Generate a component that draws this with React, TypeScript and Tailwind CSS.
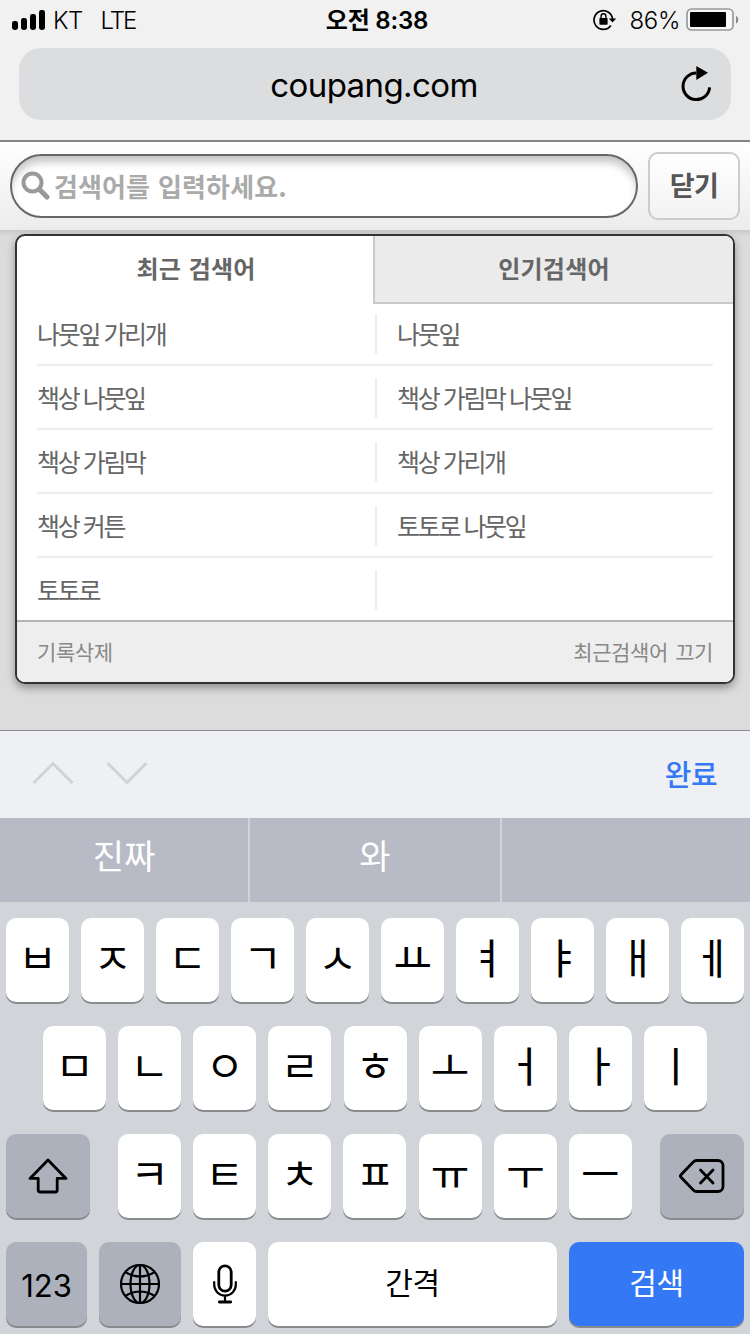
import React from 'react';
import clsx from 'clsx';

// --- Data ---
const recentKeywords = [
  ['나뭇잎 가리개', '나뭇잎'],
  ['책상 나뭇잎', '책상 가림막 나뭇잎'],
  ['책상 가림막', '책상 가리개'],
  ['책상 커튼', '토토로 나뭇잎'],
  ['토토로', ''],
];

const firstRow = ['ㅂ', 'ㅈ', 'ㄷ', 'ㄱ', 'ㅅ', 'ㅛ', 'ㅕ', 'ㅑ', 'ㅐ', 'ㅔ'];
const secondRow = ['ㅁ', 'ㄴ', 'ㅇ', 'ㄹ', 'ㅎ', 'ㅗ', 'ㅓ', 'ㅏ', 'ㅣ'];
const thirdRow = ['ㅋ', 'ㅌ', 'ㅊ', 'ㅍ', 'ㅠ', 'ㅜ', 'ㅡ'];

// --- Icons ---
const SignalIcon: React.FC = () => (
  <svg width="34" height="20" viewBox="0 0 34 20">
    <rect x="0" y="11" width="6" height="9" rx="2.4" />
    <rect x="9" y="8" width="6" height="12" rx="2.4" />
    <rect x="18" y="4" width="6" height="16" rx="2.4" />
    <rect x="27" y="0" width="6" height="20" rx="2.4" />
  </svg>
);

const RotationLockIcon: React.FC = () => (
  <svg width="24" height="22" viewBox="0 0 24 22" fill="none" stroke="#000">
    <path d="M17.9 16.4A9.3 9.3 0 1 1 19.6 10.500" strokeWidth="1.7" />
    <path d="M15.800 9.600h7.400l-3.700 4z" fill="#000" stroke="none" />
    <rect x="6.400" y="9" width="8.200" height="6.800" rx="0.800" fill="#000" stroke="none" />
    <path d="M8.100 9.800V7.200a2.400 2.400 0 0 1 4.800 0v2.600" strokeWidth="1.400" />
  </svg>
);

const BatteryIcon: React.FC = () => (
  <svg width="54" height="24" viewBox="0 0 54 24">
    <rect x="1" y="1" width="46" height="21" rx="4.500" fill="#f8f8f8" stroke="#999" strokeWidth="1.700" />
    <rect x="4" y="4" width="36" height="15" rx="1" fill="#000" />
    <path d="M50 8c3 1 3 6.500 0 7.500z" fill="#888" />
  </svg>
);

const ReloadIcon: React.FC = () => (
  <svg width="32" height="36" viewBox="0 0 32 36" fill="none">
    <path d="M28.600 21.300A13.300 13.300 0 1 1 15.300 7" stroke="#000" strokeWidth="3" />
    <path d="M15.300 0v14L27 6.800z" fill="#000" />
  </svg>
);

const SearchIcon: React.FC = () => (
  <svg width="30" height="30" viewBox="0 0 30 30" fill="none" stroke="#999">
    <circle cx="11.500" cy="11.500" r="9" strokeWidth="4" />
    <path d="M18.500 18.500l7.500 7.500" strokeWidth="5.200" strokeLinecap="round" />
  </svg>
);

const ShiftIcon: React.FC = () => (
  <svg width="42" height="38" viewBox="0 0 42 38" fill="none" stroke="#000" strokeWidth="2.800" strokeLinejoin="round">
    <path d="M21 3L3 21.400h8.200V33a2 2 0 0 0 2 2h15a2 2 0 0 0 2-2V21.400H39z" />
  </svg>
);

const DeleteIcon: React.FC = () => (
  <svg width="48" height="36" viewBox="0 0 48 36" fill="none" stroke="#000" strokeWidth="2.800" strokeLinecap="round" strokeLinejoin="round">
    <path d="M18.500 2.500H40a5 5 0 0 1 5 5v21a5 5 0 0 1-5 5H18.500a4 4 0 0 1-3-1.300L3 19.300a1.900 1.900 0 0 1 0-2.600L15.500 3.800a4 4 0 0 1 3-1.300z" />
    <path d="M22.500 12L35 25M35 12L22.500 25" />
  </svg>
);

const GlobeIcon: React.FC = () => (
  <svg width="42" height="42" viewBox="0 0 42 42" fill="none" stroke="#000" strokeWidth="2.200">
    <circle cx="21" cy="21" r="19" />
    <ellipse cx="21" cy="21" rx="9.500" ry="19" />
    <path d="M21 2v38M2 21h38M7 9.500q14 8 28 0M7 32.500q14-8 28 0" />
  </svg>
);

const MicIcon: React.FC = () => (
  <svg width="26" height="40" viewBox="0 0 26 40" fill="none" stroke="#000" strokeLinecap="round">
    <rect x="6.800" y="1.800" width="12.400" height="25.400" rx="6.200" strokeWidth="2.800" />
    <path d="M2.200 18v2.800a10.800 10.800 0 0 0 21.600 0v-2.800M13 32v5" strokeWidth="2.200" />
    <path d="M7.300 38h11.400" strokeWidth="2.800" />
  </svg>
);

// --- Keyboard key ---
interface KeyProps {
  children: React.ReactNode;
  className?: string;
}

const Key: React.FC<KeyProps> = ({ children, className }) => (
  <button
    className={clsx(
      'flex h-[84px] shrink-0 items-center justify-center rounded-[10px] shadow-[0_2px_0_#898b8f]',
      className
    )}
  >
    {children}
  </button>
);

const LetterKey: React.FC<{ letter: string }> = ({ letter }) => (
  <Key className="w-[63px] bg-white pb-[9px] text-[42px] font-normal">{letter}</Key>
);

// --- Sections ---
const BrowserBar: React.FC = () => (
  <header className="h-[142px] border-b-2 border-[#858585] bg-[#f1f1f1]">
    <div className="grid h-12 grid-cols-3 items-center pr-[10px] pl-3 pb-2">
      <div className="flex items-center font-[Inter,'Noto_Sans_CJK_KR',sans-serif] text-[24px] font-light">
        <SignalIcon />
        <span className="mt-[2px] ml-[7px] tracking-[-0.6px]">KT</span>
        <span className="mt-[2px] ml-[18px] tracking-[-2px]">LTE</span>
      </div>
      <div className="pt-[2px] pl-[2px] text-center font-[Inter,'Noto_Sans_CJK_KR',sans-serif] text-[24px] font-semibold tracking-[-0.2px] whitespace-nowrap">
        오전 8:38
      </div>
      <div className="flex items-center justify-end">
        <RotationLockIcon />
        <span className="mt-[2px] mr-[6px] ml-[13px] font-[Inter,sans-serif] text-[24px] font-light tracking-[-0.4px]">
          86%
        </span>
        <BatteryIcon />
      </div>
    </div>
    <div className="mx-[19px] flex h-[72px] items-center justify-end rounded-[22px] bg-[#dcddde] pr-[18px]">
      <span className="flex-1 pt-[2px] pl-12 text-center font-[Inter,sans-serif] text-[33px] tracking-[-0.6px]">
        coupang.com
      </span>
      <ReloadIcon />
    </div>
  </header>
);

const SearchForm: React.FC = () => (
  <div className="flex h-[88px] items-center gap-[10px] bg-gradient-to-b from-white to-[#ececec] px-[10px]">
    <div className="flex h-16 w-[628px] items-center rounded-full border-2 border-[#666] bg-white pl-[9px] shadow-[inset_0_8px_8px_-2px_#c4c4c4]">
      <SearchIcon />
      <span className="ml-[3px] text-[26px] font-bold tracking-[0.1px] text-[#aaa] [word-spacing:2px]">
        검색어를 입력하세요.
      </span>
    </div>
    <button className="h-[68px] w-[92px] rounded-[10px] border-2 border-[#ccc] bg-gradient-to-b from-white to-[#f2f2f2] pb-1 text-[27px] font-bold tracking-[-0.600px] text-[#555]">
      닫기
    </button>
  </div>
);

const KeywordPanel: React.FC = () => (
  <main className="h-[500px] bg-[#dcdcdc] px-[15px] pt-1 shadow-[inset_0_8px_5px_-5px_#c8c8c8]">
    <section className="h-[450px] overflow-hidden rounded-[10px] border-2 border-[#333] bg-white shadow-[0_4px_8px_rgba(0,0,0,0.35)]">
      <div className="flex h-[68px] text-[24px] font-bold text-[#666]">
        <div className="flex w-[356px] items-center justify-center pb-[5px] pl-[2px] tracking-[0.2px] [word-spacing:2px]">
          최근 검색어
        </div>
        <div className="flex flex-1 items-center justify-center border-b-2 border-l-2 border-[#c9c9c9] bg-[#ebebeb] pb-[3px] tracking-[0.2px]">
          인기검색어
        </div>
      </div>
      <ul className="h-[316px] px-5">
        {recentKeywords.map(([left, right]) => (
          <li
            key={left}
            className="flex h-16 items-center border-b-2 border-[#ededed] pt-[2px] text-[25px] tracking-[-2.300px] text-[#666] [word-spacing:1px] first:h-[62px] first:pt-0 last:h-[62px] last:border-b-0"
          >
            <span className="w-[338px] pb-[1px]">{left}</span>
            <span className="flex h-10 items-center border-l-2 border-[#ededed] pb-[1px] pl-5">{right}</span>
          </li>
        ))}
      </ul>
      <div className="flex h-[62px] items-center justify-between border-t-2 border-[#b5b5b5] bg-[#eee] px-5 pb-[2px] text-[21px] tracking-[-0.4px] text-[#888] [word-spacing:3px]">
        <span>기록삭제</span>
        <span>최근검색어 끄기</span>
      </div>
    </section>
  </main>
);

const InputAccessory: React.FC = () => (
  <div className="flex h-[88px] items-center justify-between border-t border-[#8e8e8e] bg-[#eff0f3] pr-[33px] pb-[3px] pl-8">
    <svg width="118" height="26" viewBox="0 0 118 26" fill="none" stroke="#d0d2d5" strokeWidth="2.800">
      <path d="M1.500 23L21 3.500L40.500 23M75.500 3L95 22.500L114.500 3" />
    </svg>
    <button className="text-[29px] font-medium tracking-[-0.6px] text-[#3478f6]">완료</button>
  </div>
);

const Suggestions: React.FC = () => (
  <div className="flex h-[84px] bg-[#b8bbc5] text-[34px] text-white">
    <div className="flex w-[250px] items-center justify-center border-r-2 border-[#d1d4da] pb-[10px]">진짜</div>
    <div className="flex w-[252px] items-center justify-center border-r-2 border-[#d1d4da] pb-[10px]">와</div>
  </div>
);

const Keyboard: React.FC = () => (
  <div className="flex h-[432px] flex-col gap-6 bg-[#d1d4d9] px-[6px] pt-4">
    <div className="flex justify-between">
      {firstRow.map((letter) => (
        <LetterKey key={letter} letter={letter} />
      ))}
    </div>
    <div className="flex justify-between px-[37px]">
      {secondRow.map((letter) => (
        <LetterKey key={letter} letter={letter} />
      ))}
    </div>
    <div className="flex justify-between">
      <Key className="w-[84px] bg-[#acb1bb]">
        <ShiftIcon />
      </Key>
      <div className="flex w-[514px] justify-between">
        {thirdRow.map((letter) => (
          <LetterKey key={letter} letter={letter} />
        ))}
      </div>
      <Key className="w-[84px] bg-[#acb1bb]">
        <DeleteIcon />
      </Key>
    </div>
    <div className="flex justify-between">
      <Key className="w-[81px] bg-[#acb1bb] pt-[3px] font-[Inter,sans-serif] text-[31px]">123</Key>
      <Key className="w-[82px] bg-[#acb1bb]">
        <GlobeIcon />
      </Key>
      <Key className="w-[63px] bg-white">
        <MicIcon />
      </Key>
      <Key className="w-[289px] bg-white pb-[7px] text-[30px] tracking-[-0.3px]">간격</Key>
      <Key className="w-[175px] bg-[#3478f6] pb-[7px] text-[30px] tracking-[-0.3px] text-white">검색</Key>
    </div>
  </div>
);

// --- Main Page Component ---
const App: React.FC = () => (
  <div className="h-[1334px] w-[750px] overflow-hidden font-['Noto_Sans_CJK_KR',sans-serif] leading-none text-black">
    <BrowserBar />
    <SearchForm />
    <KeywordPanel />
    <InputAccessory />
    <Suggestions />
    <Keyboard />
  </div>
);

export default App;
